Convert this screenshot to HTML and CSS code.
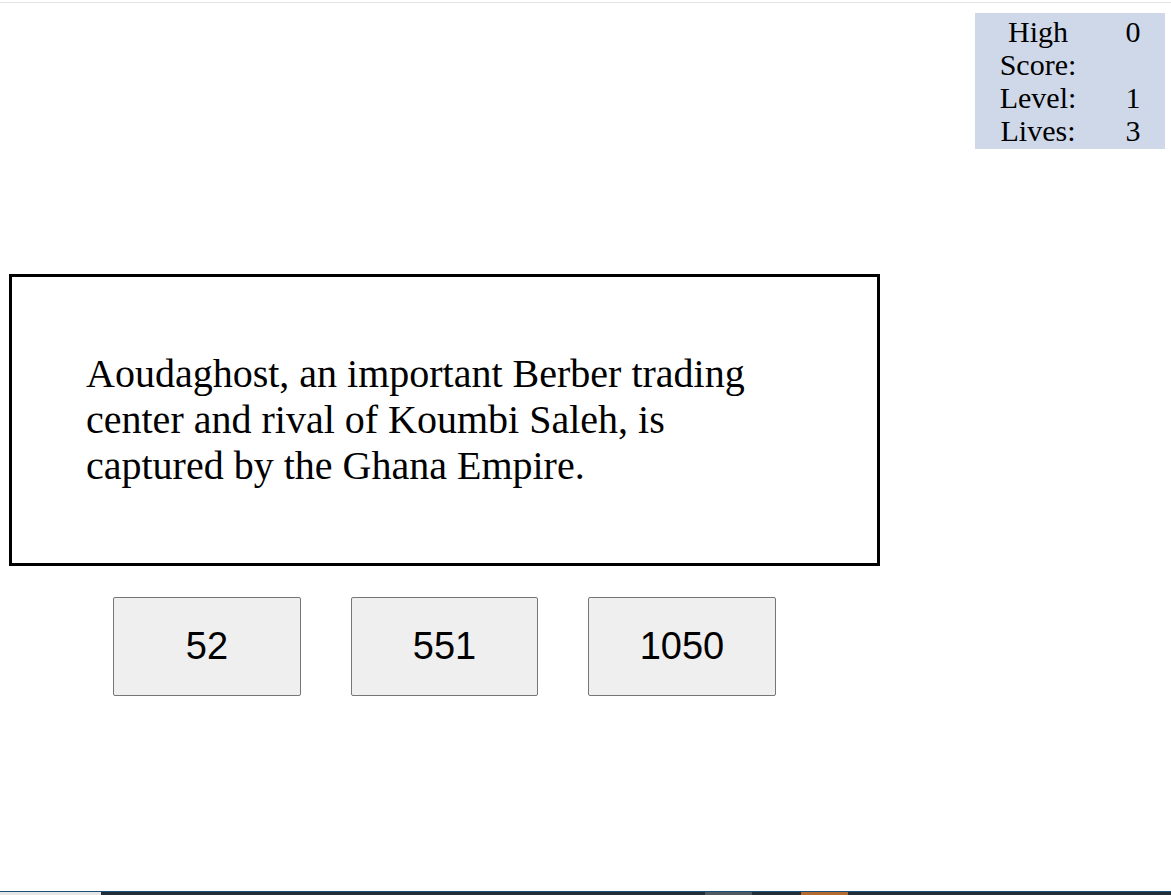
FILE: index.html
```html
<!DOCTYPE html>
<html lang="en">
<head>
<meta charset="utf-8">
<title>Timeline Quiz</title>
<link rel="stylesheet" href="styles.css">
</head>
<body>
<div class="page">
  <div class="topline"></div>
  <header class="header">
    <table class="scores">
      <tr><td class="label">High Score:</td><td class="value">0</td></tr>
      <tr><td class="label">Level:</td><td class="value">1</td></tr>
      <tr><td class="label">Lives:</td><td class="value">3</td></tr>
    </table>
  </header>
  <main class="game">
    <div class="question">
      <p class="question-text">Aoudaghost, an important Berber trading center and rival of Koumbi Saleh, is captured by the Ghana Empire.</p>
    </div>
    <div class="answers">
      <button class="answer">52</button>
      <button class="answer">551</button>
      <button class="answer">1050</button>
    </div>
  </main>
  <footer class="taskbar">
    <span class="seg seg-start"></span>
    <span class="seg seg-dark seg-a"></span>
    <span class="seg seg-gray"></span>
    <span class="seg seg-dark seg-b"></span>
    <span class="seg seg-orange"></span>
    <span class="seg seg-dark seg-fill"></span>
  </footer>
</div>
</body>
</html>
```

FILE: styles.css
```css
html, body {
  margin: 0;
  padding: 0;
  background: #ffffff;
}

body {
  font-family: "Liberation Serif", "Times New Roman", serif;
  color: #000;
}

.page {
  height: 895px;
  display: flex;
  flex-direction: column;
  overflow: hidden;
}

.topline {
  margin-top: 2px;
  height: 1px;
  background: #e4e4e4;
}

.header {
  display: flex;
  justify-content: flex-end;
  padding-right: 6px;
  margin-top: 10px;
}

.scores {
  background: #cfd8e9;
  border-collapse: collapse;
  border-spacing: 0;
  width: 190px;
  font-size: 30px;
  line-height: 33px;
}

.scores tr:first-child td {
  padding-top: 2px;
}

.scores tr:last-child td {
  padding-bottom: 2px;
}

.scores td {
  padding: 0;
  text-align: center;
  vertical-align: top;
}

.scores .label {
  width: 126px;
  padding-left: 22px;
  padding-right: 22px;
  box-sizing: border-box;
}

.scores .value {
  width: 64px;
}

.game {
  margin-top: 125px;
  padding-left: 9px;
  width: 871px;
}

.question {
  border: 3px solid #000;
  height: 292px;
  box-sizing: border-box;
  padding: 0 74px;
  display: flex;
  align-items: center;
}

.question-text {
  margin: 0;
  font-size: 40px;
  line-height: 46px;
}

.answers {
  margin-top: 31px;
  display: flex;
  justify-content: center;
  gap: 50px;
}

.answer {
  width: 187.5px;
  height: 99px;
  background: #efefef;
  border: 1px solid #767676;
  border-radius: 2px;
  font-family: "Liberation Sans", Arial, sans-serif;
  font-size: 38px;
  color: #000;
  padding: 0;
}

.taskbar {
  margin-top: auto;
  height: 3px;
  display: flex;
  border-top: 1px solid #1f4f78;
}

.seg {
  display: block;
  height: 100%;
}

.seg-start {
  width: 101px;
  background: #e6e6e6;
}

.seg-dark {
  background: #1f2e38;
}

.seg-a {
  width: 604px;
}

.seg-gray {
  width: 47px;
  background: #4f5a63;
}

.seg-b {
  width: 49px;
}

.seg-orange {
  width: 47px;
  background: #b26a2e;
}

.seg-fill {
  flex: 1;
}
```
